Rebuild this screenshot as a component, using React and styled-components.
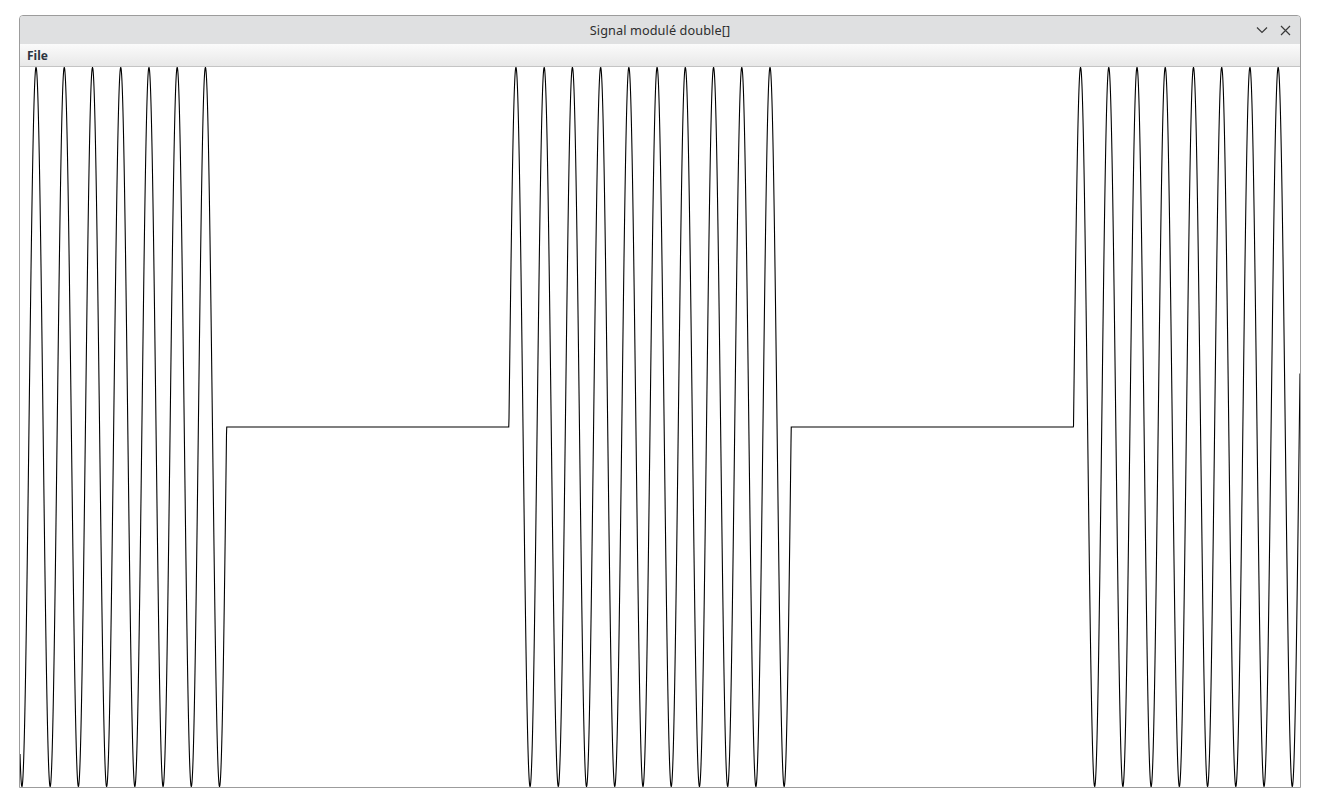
import React from 'react';
import styled, { createGlobalStyle } from 'styled-components';

const GlobalStyle = createGlobalStyle`
  html, body {
    margin: 0;
    padding: 0;
    background: #ffffff;
  }
  body {
    font-family: "Noto Sans", "Open Sans", sans-serif;
  }
`

const Desktop = styled.div`
  padding: 15px 0 0 19px;
`

const Window = styled.div`
  width: 1280px;
  border: 1px solid #9c9c9c;
  border-radius: 4px 4px 0 0;
  overflow: hidden;
  display: flex;
  flex-direction: column;
`

const TitleBar = styled.div`
  height: 28px;
  background-color: #dfe0e1;
  display: flex;
  align-items: center;
  justify-content: center;
  position: relative;
`

const Title = styled.span`
  font-size: 12.7px;
  color: #2e2e2e;
  letter-spacing: 0.1px;
`

const Controls = styled.div`
  position: absolute;
  right: 8px;
  top: 0;
  height: 100%;
  display: flex;
  align-items: center;
  gap: 9px;
`

const ControlButton = styled.span`
  width: 14px;
  height: 14px;
  display: flex;
  align-items: center;
  justify-content: center;
  color: #3a3a3a;
`

const MenuBar = styled.div`
  height: 22px;
  background: linear-gradient(#fbfbfb, #e8e8e8);
  border-bottom: 1px solid #c4c4c4;
  display: flex;
  align-items: center;
  padding-left: 7px;
`

const MenuItem = styled.span`
  font-size: 12px;
  font-weight: 700;
  color: #2c3440;
`

const Plot = styled.svg`
  display: block;
  width: 1280px;
  height: 720px;
  background: #ffffff;
`

const W = 1280
const H = 720
const PERIOD = 28.23
const ORIGIN = -19.25
const BIT = PERIOD * 10
const BITS_START = ORIGIN - 2 * PERIOD
const BITS = [1, 0, 1, 0, 1, 0]

const buildPath = () => {
  const pts = []
  for (let x = 0; x <= W; x += 0.25) {
    const idx = Math.floor((x - BITS_START) / BIT)
    const on = BITS[idx] === 1
    const y = on
      ? H / 2 - (H / 2 - 0.5) * Math.sin((2 * Math.PI * (x - ORIGIN)) / PERIOD)
      : H / 2
    pts.push(`${x.toFixed(2)},${y.toFixed(2)}`)
  }
  return 'M' + pts.join('L')
}

const signalPath = buildPath()

export default function App() {
  return (
    <>
      <GlobalStyle />
      <Desktop>
        <Window>
          <TitleBar>
            <Title>Signal modulé double[]</Title>
            <Controls>
              <ControlButton>
                <svg width="12" height="8" viewBox="0 0 12 8">
                  <path d="M1 1.5 L6 6.5 L11 1.5" fill="none" stroke="currentColor" strokeWidth="1.2" />
                </svg>
              </ControlButton>
              <ControlButton>
                <svg width="11" height="11" viewBox="0 0 11 11">
                  <path d="M1 1 L10 10 M10 1 L1 10" fill="none" stroke="currentColor" strokeWidth="1.2" />
                </svg>
              </ControlButton>
            </Controls>
          </TitleBar>
          <MenuBar>
            <MenuItem>File</MenuItem>
          </MenuBar>
          <Plot viewBox={`0 0 ${W} ${H}`}>
            <path d={signalPath} fill="none" stroke="#000" strokeWidth="1.1" />
          </Plot>
        </Window>
      </Desktop>
    </>
  )
}
